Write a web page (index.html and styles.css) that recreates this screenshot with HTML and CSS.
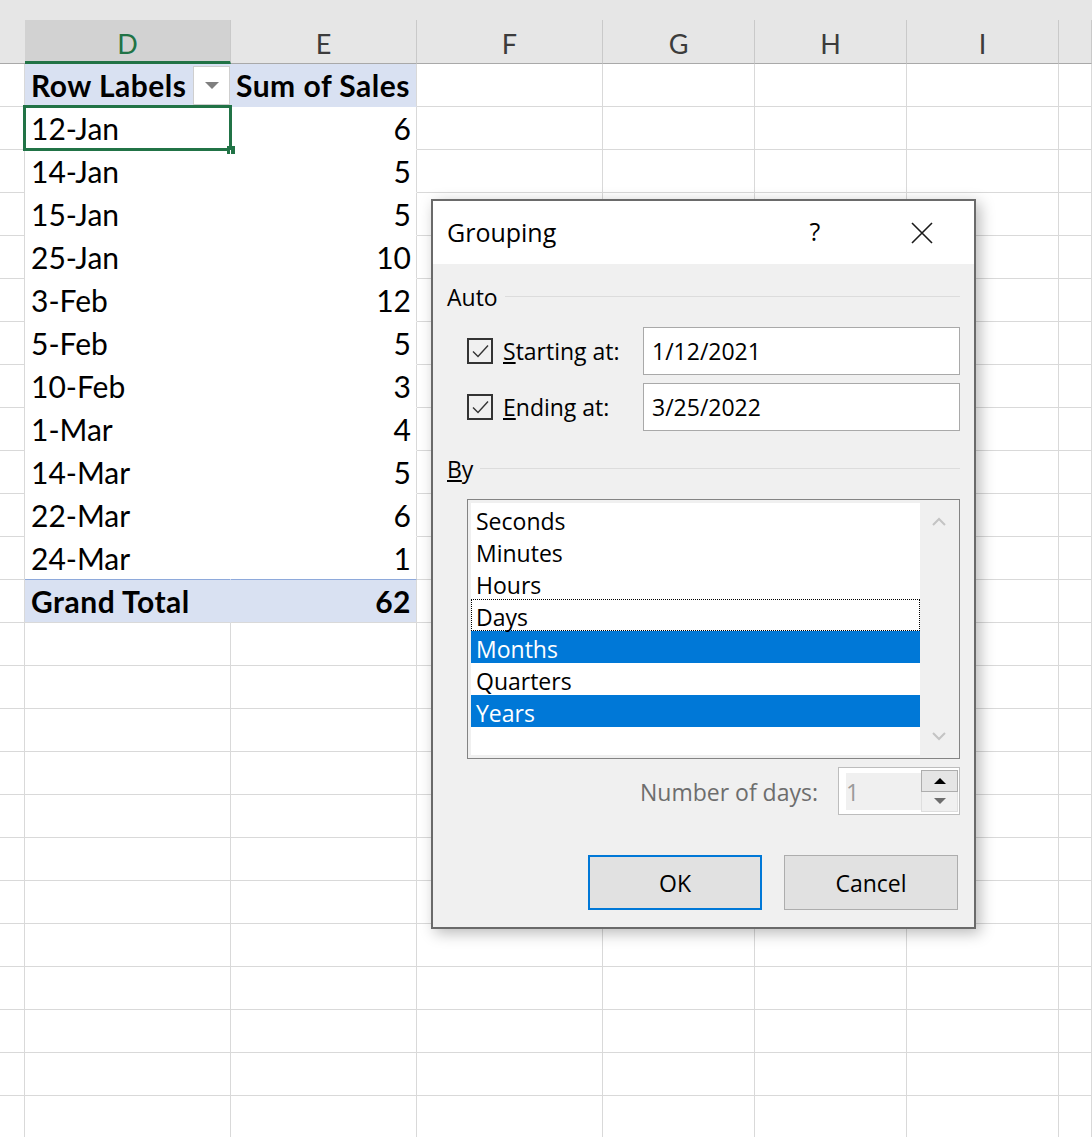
FILE: index.html
```html
<!DOCTYPE html>
<html lang="en">
<head>
    <meta charset="UTF-8">
    <meta name="viewport" content="width=device-width, initial-scale=1.0">
    <title>Grouping</title>
    <link rel="stylesheet" href="styles.css">
</head>
<body>
    <div class="topbar"></div>
    <div class="sheet" id="sheet"></div>

    <div class="dialog">
        <div class="dlg-title">
            <span class="dlg-name">Grouping</span>
            <span class="dlg-help">?</span>
            <span class="dlg-close">
                <svg width="22" height="22" viewBox="0 0 22 22">
                    <path d="M1 1 L21 21 M21 1 L1 21" stroke="#1a1a1a" stroke-width="1.6" fill="none"/>
                </svg>
            </span>
        </div>
        <div class="dlg-body">
            <div class="group-head">
                <span>Auto</span>
                <span class="group-line"></span>
            </div>
            <div class="field">
                <span class="check">
                    <svg width="22" height="22" viewBox="0 0 22 22">
                        <path d="M4 11.5 L9 16.5 L19 5.5" stroke="#333" stroke-width="1.4" fill="none"/>
                    </svg>
                </span>
                <span class="field-label"><u>S</u>tarting at:</span>
                <span class="text-box">1/12/2021</span>
            </div>
            <div class="field second">
                <span class="check">
                    <svg width="22" height="22" viewBox="0 0 22 22">
                        <path d="M4 11.5 L9 16.5 L19 5.5" stroke="#333" stroke-width="1.4" fill="none"/>
                    </svg>
                </span>
                <span class="field-label"><u>E</u>nding at:</span>
                <span class="text-box">3/25/2022</span>
            </div>

            <div class="group-head by">
                <span><u>B</u>y</span>
                <span class="group-line"></span>
            </div>
            <div class="listbox">
                <div class="list">
                    <div class="item">Seconds</div>
                    <div class="item">Minutes</div>
                    <div class="item">Hours</div>
                    <div class="item focus">Days</div>
                    <div class="item selected">Months</div>
                    <div class="item">Quarters</div>
                    <div class="item selected">Years</div>
                </div>
                <div class="scroll">
                    <svg width="16" height="10" viewBox="0 0 16 10">
                        <path d="M2 8 L8 2 L14 8" stroke="#c4c4c4" stroke-width="2" fill="none"/>
                    </svg>
                    <svg width="16" height="10" viewBox="0 0 16 10">
                        <path d="M2 2 L8 8 L14 2" stroke="#c4c4c4" stroke-width="2" fill="none"/>
                    </svg>
                </div>
            </div>

            <div class="days-row">
                <span class="days-label">Number of days:</span>
                <div class="spinner">
                    <span class="spin-value">1</span>
                    <div class="spin-buttons">
                        <span class="spin-up"><span class="tri-up"></span></span>
                        <span class="spin-down"><span class="tri-down"></span></span>
                    </div>
                </div>
            </div>

            <div class="buttons">
                <button class="btn default">OK</button>
                <button class="btn">Cancel</button>
            </div>
        </div>
    </div>

    <script>
        const sheet = document.getElementById('sheet');
        const columns = ['D', 'E', 'F', 'G', 'H', 'I', ''];
        const sales = [
            ['12-Jan', 6], ['14-Jan', 5], ['15-Jan', 5], ['25-Jan', 10],
            ['3-Feb', 12], ['5-Feb', 5], ['10-Feb', 3], ['1-Mar', 4],
            ['14-Mar', 5], ['22-Mar', 6], ['24-Mar', 1]
        ];
        const rowCount = 25;

        function cell(cls, text) {
            const el = document.createElement('div');
            el.className = cls;
            if (text !== undefined) el.textContent = text;
            sheet.appendChild(el);
            return el;
        }

        // column headers
        cell('ch corner');
        columns.forEach(c => cell(c === 'D' ? 'ch active' : 'ch', c));

        const total = sales.reduce((sum, s) => sum + s[1], 0);

        for (let r = 0; r < rowCount; r++) {
            cell('rh');
            if (r === 0) {
                const head = cell('cell pv pv-head pv-d', 'Row Labels');
                const filter = document.createElement('span');
                filter.className = 'filter';
                head.appendChild(filter);
                cell('cell pv pv-head pv-e', 'Sum of Sales');
            } else if (r <= sales.length) {
                const last = r === sales.length ? ' pv-last' : '';
                const label = cell('cell pv pv-d' + last, sales[r - 1][0]);
                cell('cell pv pv-e num' + last, sales[r - 1][1]);
                if (r === 1) {
                    const sel = document.createElement('span');
                    sel.className = 'selection';
                    sel.innerHTML = '<span class="handle"></span>';
                    label.appendChild(sel);
                }
            } else if (r === sales.length + 1) {
                cell('cell pv-total pv-d', 'Grand Total');
                cell('cell pv-total pv-e num', total);
            } else {
                cell('cell');
                cell('cell');
            }
            for (let c = 0; c < 5; c++) cell('cell');
        }
    </script>
</body>
</html>
```

FILE: styles.css
```css
body {
    margin: 0;
    padding: 0;
    background-color: #fff;
    overflow: hidden;
    font-family: Lato, "Open Sans", sans-serif;
}
.topbar {
    height: 20px;
    background-color: #e6e6e6;
}
.sheet {
    display: grid;
    grid-template-columns: 25px 206px 186px 186px 152px 152px 152px 1fr;
    grid-template-rows: 44px;
    grid-auto-rows: 43px;
}
.ch {
    box-sizing: border-box;
    background-color: #e6e6e6;
    border-right: 1px solid #c9c9c9;
    border-bottom: 1px solid #a9a9a9;
    display: flex;
    align-items: center;
    justify-content: center;
    padding-top: 3px;
    font-size: 27px;
    color: #3c3c3c;
}
.ch.corner {
    border-right: none;
}
.ch.active {
    background-color: #d2d2d2;
    border-bottom: 3px solid #217346;
    color: #217346;
    padding-top: 5px;
}
.rh,
.cell {
    box-sizing: border-box;
    border-right: 1px solid #d9d9d9;
    border-bottom: 1px solid #d9d9d9;
}
.cell {
    display: flex;
    align-items: center;
    padding: 0 5px 0 6px;
    font-size: 30px;
    color: #000;
    white-space: nowrap;
}
.num {
    justify-content: flex-end;
}
.pv {
    border-bottom-color: #fff;
}
.pv-d {
    border-right-color: #fff;
    position: relative;
}
.pv-head {
    background-color: #d9e1f2;
    border-bottom-color: #d9e1f2;
    font-weight: bold;
    letter-spacing: 0.5px;
}
.pv-head.pv-d {
    border-right-color: #d9e1f2;
}
.pv-e {
    padding-left: 5px;
}
.pv-last {
    border-bottom-color: #8ea9db;
}
.pv-total {
    background-color: #d9e1f2;
    font-weight: bold;
    letter-spacing: 0.5px;
}
.pv-total.pv-d {
    border-right-color: #d9e1f2;
}
.filter {
    margin-left: auto;
    margin-right: -5px;
    width: 37px;
    height: 39px;
    box-sizing: border-box;
    background-color: #fff;
    border: 1px solid #cfcfcf;
    display: flex;
    align-items: center;
    justify-content: center;
}
.filter::after {
    content: "";
    border-left: 7px solid transparent;
    border-right: 7px solid transparent;
    border-top: 7px solid #7f7f7f;
}
.selection {
    position: absolute;
    left: -2px;
    top: -2px;
    right: -2px;
    bottom: -2px;
    border: 3px solid #217346;
}
.handle {
    position: absolute;
    right: -6px;
    bottom: -6px;
    width: 8px;
    height: 8px;
    background-color: #217346;
}

/* Grouping dialog */
.dialog {
    position: absolute;
    left: 431px;
    top: 199px;
    width: 545px;
    box-sizing: border-box;
    border: 2px solid #6a6a6a;
    background-color: #f0f0f0;
    box-shadow: 4px 4px 14px rgba(0, 0, 0, 0.28);
    font-family: "Open Sans", "Noto Sans", sans-serif;
    font-size: 23px;
    color: #000;
}
.dlg-title {
    height: 63px;
    background-color: #fff;
    display: flex;
    align-items: center;
    padding-left: 14px;
}
.dlg-name {
    flex: 1;
    font-size: 25px;
    margin-top: -2px;
}
.dlg-help {
    width: 80px;
    margin-right: 14px;
    margin-top: -3px;
    text-align: center;
    font-size: 25px;
}
.dlg-close {
    width: 105px;
    display: flex;
    justify-content: center;
}
.dlg-body {
    padding: 17px 14px 17px 14px;
}
.group-head {
    display: flex;
    align-items: center;
    height: 32px;
    gap: 7px;
}
.group-line {
    flex: 1;
    height: 1px;
    background-color: #dcdcdc;
    margin-top: -2px;
}
.group-head.by {
    margin-top: 22px;
}
.field {
    display: flex;
    align-items: center;
    margin-top: 14px;
    margin-left: 20px;
    height: 48px;
}
.field.second {
    margin-top: 8px;
}
.check {
    width: 26px;
    height: 26px;
    box-sizing: border-box;
    border: 2px solid #333;
    display: flex;
    align-items: center;
    justify-content: center;
}
.field-label {
    margin-left: 10px;
}
.text-box {
    margin-left: auto;
    width: 317px;
    height: 48px;
    box-sizing: border-box;
    border: 1px solid #a9a9a9;
    background-color: #fff;
    padding-left: 8px;
    display: flex;
    align-items: center;
}
.listbox {
    margin-top: 14px;
    margin-left: 20px;
    width: 493px;
    height: 260px;
    box-sizing: border-box;
    border: 1px solid #848484;
    padding: 3px 1px 3px 3px;
    display: flex;
}
.list {
    flex: 1;
    background-color: #fff;
}
.item {
    height: 32px;
    line-height: 32px;
    padding: 2px 0 0 5px;
    box-sizing: border-box;
}
.item.focus {
    border: 1px dotted #000;
    line-height: 30px;
    padding: 2px 0 0 4px;
}
.item.selected {
    background-color: #0078d7;
    color: #fff;
}
.scroll {
    width: 38px;
    display: flex;
    flex-direction: column;
    justify-content: space-between;
    align-items: center;
    padding: 14px 0 14px;
}
.days-row {
    margin-top: 8px;
    display: flex;
    justify-content: flex-end;
    align-items: center;
    gap: 20px;
}
.days-label {
    color: #6d6d6d;
    margin-top: 2px;
}
.spinner {
    width: 122px;
    height: 48px;
    box-sizing: border-box;
    border: 1px solid #bdbdbd;
    background-color: #fff;
    padding: 2px 1px 2px 7px;
    display: flex;
}
.spin-value {
    flex: 1;
    margin: 3px 0 2px;
    background-color: #f0f0f0;
    color: #9a9a9a;
    display: flex;
    align-items: center;
}
.spin-buttons {
    width: 37px;
    display: flex;
    flex-direction: column;
}
.spin-up,
.spin-down {
    flex: 1;
    box-sizing: border-box;
    display: flex;
    align-items: center;
    justify-content: center;
}
.spin-up {
    background-color: #e5e5e5;
    border: 1px solid #adadad;
}
.spin-down {
    background-color: #f0f0f0;
    border: 1px solid #dedede;
    border-top: none;
}
.tri-up {
    border-left: 6px solid transparent;
    border-right: 6px solid transparent;
    border-bottom: 6px solid #000;
}
.tri-down {
    border-left: 6px solid transparent;
    border-right: 6px solid transparent;
    border-top: 6px solid #6d6d6d;
}
.buttons {
    margin-top: 40px;
    margin-right: 2px;
    display: flex;
    justify-content: flex-end;
    gap: 22px;
}
.btn {
    width: 174px;
    height: 55px;
    box-sizing: border-box;
    background-color: #e1e1e1;
    border: 1px solid #adadad;
    font-family: "Open Sans", "Noto Sans", sans-serif;
    font-size: 23px;
    color: #000;
    padding: 0;
}
.btn.default {
    border: 2px solid #0078d7;
}
```
